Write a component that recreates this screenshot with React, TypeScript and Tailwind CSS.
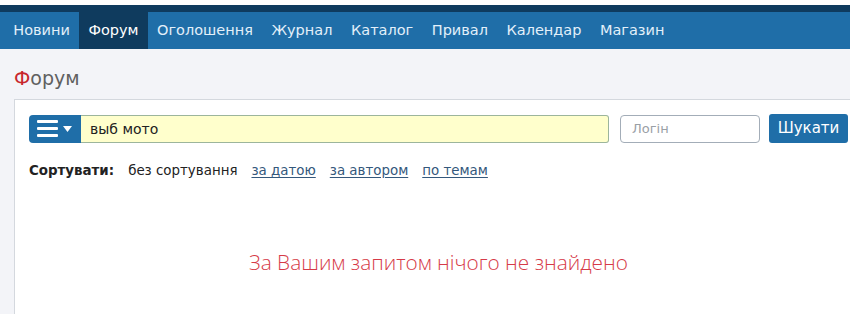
import React from "react";

const navItems = [
  "Новини",
  "Форум",
  "Оголошення",
  "Журнал",
  "Каталог",
  "Привал",
  "Календар",
  "Магазин",
];

const sortLinks = ["за датою", "за автором", "по темам"];

const MenuButton: React.FC = () => (
  <button className="flex h-[28px] w-[52px] shrink-0 items-center gap-[5px] rounded-l-[4px] bg-[#1f6ea8] pl-[8px]">
    <svg width="21" height="17" viewBox="0 0 21 17">
      <rect x="0" y="0" width="21" height="3" rx="1" fill="#fff" />
      <rect x="0" y="7" width="21" height="3" rx="1" fill="#fff" />
      <rect x="0" y="14" width="21" height="3" rx="1" fill="#fff" />
    </svg>
    <svg width="9" height="6" viewBox="0 0 9 6">
      <path d="M0 0 H9 L4.5 6 Z" fill="#fff" />
    </svg>
  </button>
);

export default function App() {
  return (
    <div
      className="h-[314px] w-[850px] overflow-hidden bg-[#f3f4f8]"
      style={{ fontFamily: '"DejaVu Sans", Verdana, sans-serif' }}
    >
      <div className="w-[876px]">
        <div className="h-[5px] bg-white" />
        <div className="h-[7px] bg-[#0f3b5e]" />
        <nav className="flex h-[37px] bg-[#1f6ea8] pl-[4px]">
          {navItems.map((item) => (
            <a
              key={item}
              className={
                "flex items-center px-[9.25px] text-[14.5px] text-[#e3f0fa] " +
                (item === "Форум" ? "bg-[#0f3b5e] text-white" : "")
              }
            >
              {item}
            </a>
          ))}
        </nav>

        <div className="px-[14px]">
          <h1 className="flex h-[50px] items-center pt-[9px] text-[19px] text-[#606060]">
            <span className="text-[#c8262c]">Ф</span>орум
          </h1>

          <div className="h-[230px] border-l border-t border-[#d4d8de] bg-white px-[14px] pt-[14px]">
            <div className="flex items-center">
              <MenuButton />
              <input
                readOnly
                value="выб мото"
                className="h-[28px] w-[528px] rounded-r-[3px] border border-l-0 border-[#9cb59c] bg-[#ffffcc] px-[9px] text-[14px] text-[#222] outline-none"
              />
              <input
                readOnly
                placeholder="Логін"
                className="ml-[11px] h-[28px] w-[140px] rounded-[4px] border border-[#a3adb8] bg-white px-[11px] text-[13px] text-[#222] outline-none placeholder:text-[#9aa0a6]"
              />
              <button className="ml-[9px] h-[29px] w-[79px] rounded-[3px] bg-[#1f6ea8] text-[15px] text-white">
                Шукати
              </button>
            </div>

            <div className="mt-[18px] flex items-center text-[13.4px] text-[#222]">
              <span className="font-bold">Сортувати:</span>
              <span className="ml-[14px]">без сортування</span>
              {sortLinks.map((link) => (
                <a
                  key={link}
                  className="ml-[14px] text-[#34587c] underline underline-offset-2"
                >
                  {link}
                </a>
              ))}
            </div>

            <p
              className="mt-[66px] text-center text-[20.8px] font-light text-[#d63a48]"
              style={{ fontFamily: '"Open Sans", sans-serif' }}
            >
              За Вашим запитом нічого не знайдено
            </p>
          </div>
        </div>
      </div>
    </div>
  );
}
